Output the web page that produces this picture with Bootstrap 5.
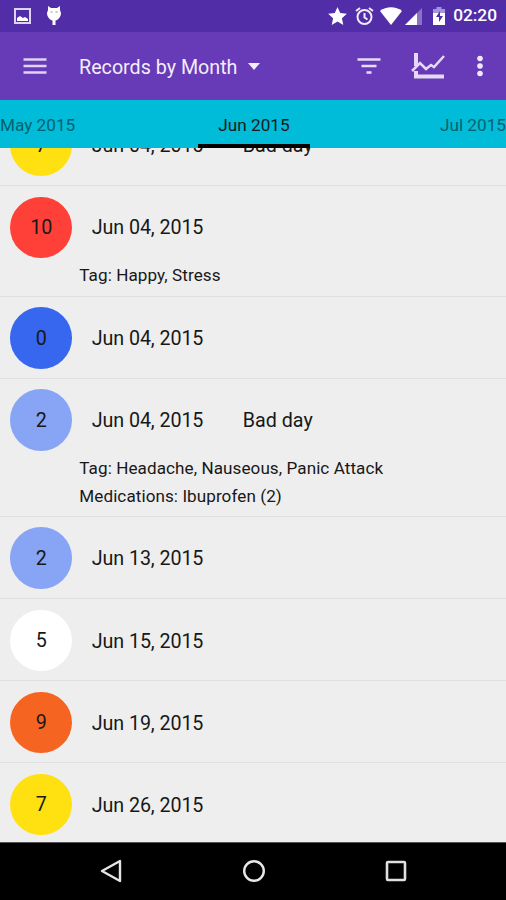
<!DOCTYPE html>
<html lang="en">
<head>
<meta charset="utf-8">
<meta name="viewport" content="width=device-width, initial-scale=1">
<title>Records by Month</title>
<link href="https://cdn.jsdelivr.net/npm/bootstrap@5.3.0/dist/css/bootstrap.min.css" rel="stylesheet">
<style>
body{font-family:Roboto,"Liberation Sans",sans-serif;height:900px;background:#eee;color:#181818;overflow:hidden}
svg{display:block;flex:none}
.status{height:32px;background:#512da8;padding:0 9px 0 14px;font-size:17.3px;font-weight:500}
.alarm{margin-left:8px}
.wifi{margin-left:6px}
.signal{margin-left:3px}
.battery{margin-left:11px}
.appbar{height:68px;background:#673ab7;color:#f3edfc;padding:0 23px 0 23px}
.title{font-size:19.7px;line-height:26px;margin-left:32px;padding-top:3px}
.caret{margin-left:11px}
.chart{margin:2px 32px 0 30px}
.months{height:48px;background:#00bcd9;font-size:17.2px;line-height:50px;display:grid;grid-template-columns:198px 112px 196px;z-index:2}
.months .side{color:#05616f}
.months .current{border-bottom:4px solid #000;line-height:50px;height:48px}
.records{height:694px}
.records ul{margin-top:-43.9px}
.record{height:82.1px;border-bottom:1px solid #dfdfdf;padding:10.3px 10.3px 0}
.one-note{height:110.7px}
.two-notes{height:138.2px}
.score{width:62px;height:61.5px;font-size:19.7px;padding-top:1px}
.when{font-size:19.7px;letter-spacing:-.09px;width:151px;margin-left:19.500px;padding-top:2px}
.event{font-size:19.7px;padding-top:2px}
.notes{font-size:17.1px;letter-spacing:.07px;line-height:28px;margin:3px 0 0 69px}
.c10{background:#ff4038}.c0{background:#3767ee}.c2{background:#88a4f5}.c5{background:#fff}.c9{background:#f66421}.c7{background:#ffe010}
.softkeys{height:58px;background:#000;border-top:1px solid #555;padding:0 0 2px 1px}
.home{margin:0 118.500px}
</style>
</head>
<body class="d-flex flex-column">
<header>
  <div class="status d-flex align-items-center text-white">
    <svg width="17" height="16" viewBox="0 0 17 16"><path d="M1 1h15v14H1z" fill="none" stroke="#ded3f3" stroke-width="2"/><path d="M3 13v-3l3-2 3 2 2-1 3 2v2z" fill="#fff"/></svg>
    <svg class="ms-3" width="14" height="20" viewBox="0 0 14 20"><path d="M1 0l3 2h6l3-2v4l1 3c0 4-3 7-5.500 7.500V19h-3v-4.500C3 14 0 11 0 7l1-3z" fill="#fff"/><path d="M3.500 6h2M8.500 6h2" stroke="#9b82cf"/></svg>
    <div class="ms-auto d-flex align-items-center">
      <svg width="19" height="18" viewBox="0 0 19 18"><path d="M9.500 0l2.700 6.100 6.700.7-5 4.500 1.400 6.600-5.800-3.400-5.800 3.400 1.400-6.600-5-4.500 6.700-.7z" fill="#fff"/></svg>
      <svg class="alarm" width="19" height="18" viewBox="0 0 19 18"><g fill="none" stroke="#f1ebfb" stroke-width="2"><circle cx="9.500" cy="10" r="7"/><path d="M9.500 6v4.500l3 2M1 4l4-3M18 4l-4-3"/></g></svg>
      <svg class="wifi" width="22" height="18" viewBox="0 0 22 18"><path d="M0 4C6-1 16-1 22 4L11 18z" fill="#fff"/></svg>
      <svg class="signal" width="17" height="17" viewBox="0 0 17 17"><path d="M0 17L17 0v17z" fill="#8b72c8"/><path d="M0 17L12 5v12z" fill="#fff"/></svg>
      <svg class="battery" width="12" height="18" viewBox="0 0 12 18"><path d="M0 2h3.500V0h5v2H12v5H0z" fill="#a793d8"/><path d="M0 6h12v12H0z" fill="#fff"/><path d="M7 4l-4 6h3v5l4-6H7z" fill="#512da8"/></svg>
      <span class="ms-2">02:20</span>
    </div>
  </div>
  <nav class="appbar d-flex align-items-center">
    <svg width="24" height="16" viewBox="0 0 24 16"><path d="M.500 1.500h23M.500 8h23M.500 14.500h23" stroke="#e0d4f5" stroke-width="2.300"/></svg>
    <span class="title">Records by Month</span>
    <svg class="caret" width="12" height="7" viewBox="0 0 12 7"><path d="M0 0h12L6 7z" fill="#f3edfc"/></svg>
    <div class="ms-auto d-flex align-items-center">
      <svg width="24" height="16" viewBox="0 0 24 16"><path d="M.500 1.500h23M4.500 8h15M9.500 14.500h5" stroke="#e6dcf7" stroke-width="2.500"/></svg>
      <svg class="chart" width="34" height="28" viewBox="0 0 34 28"><path d="M5 0v13M5 18v5.500h28" fill="none" stroke="#e4d9f6" stroke-width="4"/><path d="M1 18l8-8 6 6 5-4 3 2L33 3" fill="none" stroke="#e4d9f6" stroke-width="2.500"/></svg>
      <svg width="6" height="22" viewBox="0 0 6 22"><g fill="#f0e9fb"><circle cx="3" cy="3.500" r="2.800"/><circle cx="3" cy="11" r="2.800"/><circle cx="3" cy="18.500" r="2.800"/></g></svg>
    </div>
  </nav>
</header>
<div class="months position-relative">
  <span class="side">May 2015</span><span class="current text-center">Jun 2015</span><span class="side text-end">Jul 2015</span>
</div>
<main class="records overflow-hidden">
  <ul class="list-unstyled mb-0">
    <li class="record"><div class="d-flex align-items-center"><span class="score c7 rounded-circle d-flex align-items-center justify-content-center">7</span><span class="when">Jun 04, 2015</span><span class="event">Bad day</span></div></li>
    <li class="record one-note"><div class="d-flex align-items-center"><span class="score c10 rounded-circle d-flex align-items-center justify-content-center">10</span><span class="when">Jun 04, 2015</span></div><div class="notes">Tag: Happy, Stress</div></li>
    <li class="record"><div class="d-flex align-items-center"><span class="score c0 rounded-circle d-flex align-items-center justify-content-center">0</span><span class="when">Jun 04, 2015</span></div></li>
    <li class="record two-notes"><div class="d-flex align-items-center"><span class="score c2 rounded-circle d-flex align-items-center justify-content-center">2</span><span class="when">Jun 04, 2015</span><span class="event">Bad day</span></div><div class="notes">Tag: Headache, Nauseous, Panic Attack<br>Medications: Ibuprofen (2)</div></li>
    <li class="record"><div class="d-flex align-items-center"><span class="score c2 rounded-circle d-flex align-items-center justify-content-center">2</span><span class="when">Jun 13, 2015</span></div></li>
    <li class="record"><div class="d-flex align-items-center"><span class="score c5 rounded-circle d-flex align-items-center justify-content-center">5</span><span class="when">Jun 15, 2015</span></div></li>
    <li class="record"><div class="d-flex align-items-center"><span class="score c9 rounded-circle d-flex align-items-center justify-content-center">9</span><span class="when">Jun 19, 2015</span></div></li>
    <li class="record"><div class="d-flex align-items-center"><span class="score c7 rounded-circle d-flex align-items-center justify-content-center">7</span><span class="when">Jun 26, 2015</span></div></li>
  </ul>
</main>
<footer class="softkeys d-flex align-items-center justify-content-center">
  <svg width="24" height="24" viewBox="0 0 24 24"><path d="M3 12L21 2v20z" fill="none" stroke="#e4e4e4" stroke-width="2.400" stroke-linejoin="round"/></svg>
  <svg class="home" width="24" height="24" viewBox="0 0 24 24"><circle cx="12" cy="12" r="9.800" fill="none" stroke="#e8e8e8" stroke-width="2.400"/></svg>
  <svg width="24" height="24" viewBox="0 0 24 24"><rect x="3" y="3" width="18" height="18" rx="1" fill="none" stroke="#e0e0e0" stroke-width="2.600"/></svg>
</footer>
<script src="https://cdn.jsdelivr.net/npm/bootstrap@5.3.0/dist/js/bootstrap.bundle.min.js"></script>
</body>
</html>
